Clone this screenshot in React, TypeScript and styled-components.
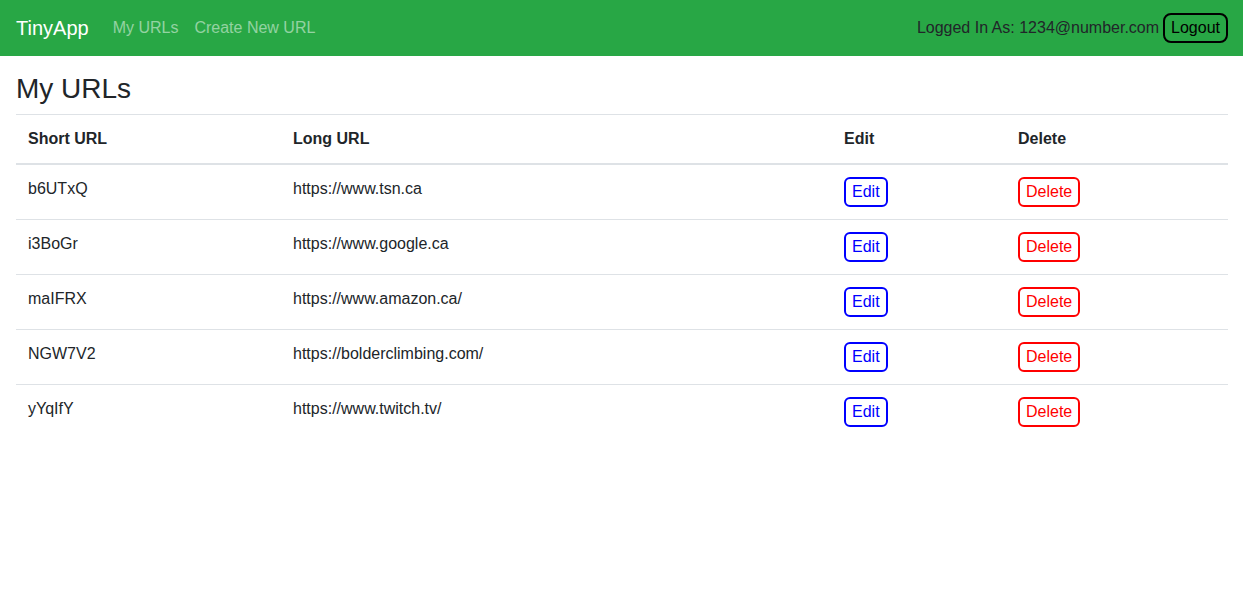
import React from "react";
import styled, { createGlobalStyle } from "styled-components";

const Global = createGlobalStyle`
  html, body { margin: 0; padding: 0; background: #fff; }
  body {
    font-family: "Liberation Sans", Arial, sans-serif;
    font-size: 16px;
    line-height: 1.5;
    color: #212529;
  }
  * { box-sizing: border-box; }
`;

const Navbar = styled.nav`
  height: 56px;
  background: #28a745;
  display: flex;
  align-items: center;
  padding: 0 15px 0 16px;
`;

const Brand = styled.a`
  font-size: 20px;
  color: #fff;
  margin-right: 16px;
  text-decoration: none;
  line-height: 30px;
`;

const NavLink = styled.a`
  color: rgba(255, 255, 255, 0.5);
  padding: 8px;
  text-decoration: none;
`;

const NavRight = styled.div`
  margin-left: auto;
  display: flex;
  align-items: center;
  gap: 4px;
`;

const UserText = styled.span`
  color: #212529;
`;

const OutlineButton = styled.button<{ $color: string; $radius?: number }>`
  font-family: inherit;
  font-size: 16px;
  line-height: 24px;
  background: transparent;
  color: ${(p) => p.$color};
  border: 2px solid ${(p) => p.$color};
  border-radius: ${(p) => p.$radius ?? 6}px;
  padding: 1px 6px;
  cursor: pointer;
`;

const Main = styled.main`
  padding: 16px 15px 0 16px;
`;

const Title = styled.h3`
  font-size: 28px;
  font-weight: 500;
  line-height: 1.2;
  margin: 0 0 8px;
`;

const Table = styled.table`
  width: 100%;
  border-collapse: collapse;
  table-layout: fixed;
`;

const Th = styled.th<{ $w: number }>`
  width: ${(p) => p.$w}px;
  text-align: left;
  font-weight: 700;
  padding: 12px;
  vertical-align: bottom;
  border-top: 1px solid #dee2e6;
  border-bottom: 2px solid #dee2e6;
`;

const Td = styled.td`
  padding: 12px;
  vertical-align: top;
  border-top: 1px solid #dee2e6;
`;

const rows = [
  ["b6UTxQ", "https://www.tsn.ca"],
  ["i3BoGr", "https://www.google.ca"],
  ["maIFRX", "https://www.amazon.ca/"],
  ["NGW7V2", "https://bolderclimbing.com/"],
  ["yYqIfY", "https://www.twitch.tv/"],
];

export default function App() {
  return (
    <>
      <Global />
      <Navbar>
        <Brand href="#">TinyApp</Brand>
        <NavLink href="#">My URLs</NavLink>
        <NavLink href="#">Create New URL</NavLink>
        <NavRight>
          <UserText>Logged In As: 1234@number.com</UserText>
          <OutlineButton $color="#000" $radius={8}>Logout</OutlineButton>
        </NavRight>
      </Navbar>
      <Main>
        <Title>My URLs</Title>
        <Table>
          <thead>
            <tr>
              <Th $w={265}>Short URL</Th>
              <Th $w={551}>Long URL</Th>
              <Th $w={174}>Edit</Th>
              <Th $w={222}>Delete</Th>
            </tr>
          </thead>
          <tbody>
            {rows.map(([s, l]) => (
              <tr key={s}>
                <Td>{s}</Td>
                <Td>{l}</Td>
                <Td>
                  <OutlineButton $color="#0000ff">Edit</OutlineButton>
                </Td>
                <Td>
                  <OutlineButton $color="#ff0000">Delete</OutlineButton>
                </Td>
              </tr>
            ))}
          </tbody>
        </Table>
      </Main>
    </>
  );
}
